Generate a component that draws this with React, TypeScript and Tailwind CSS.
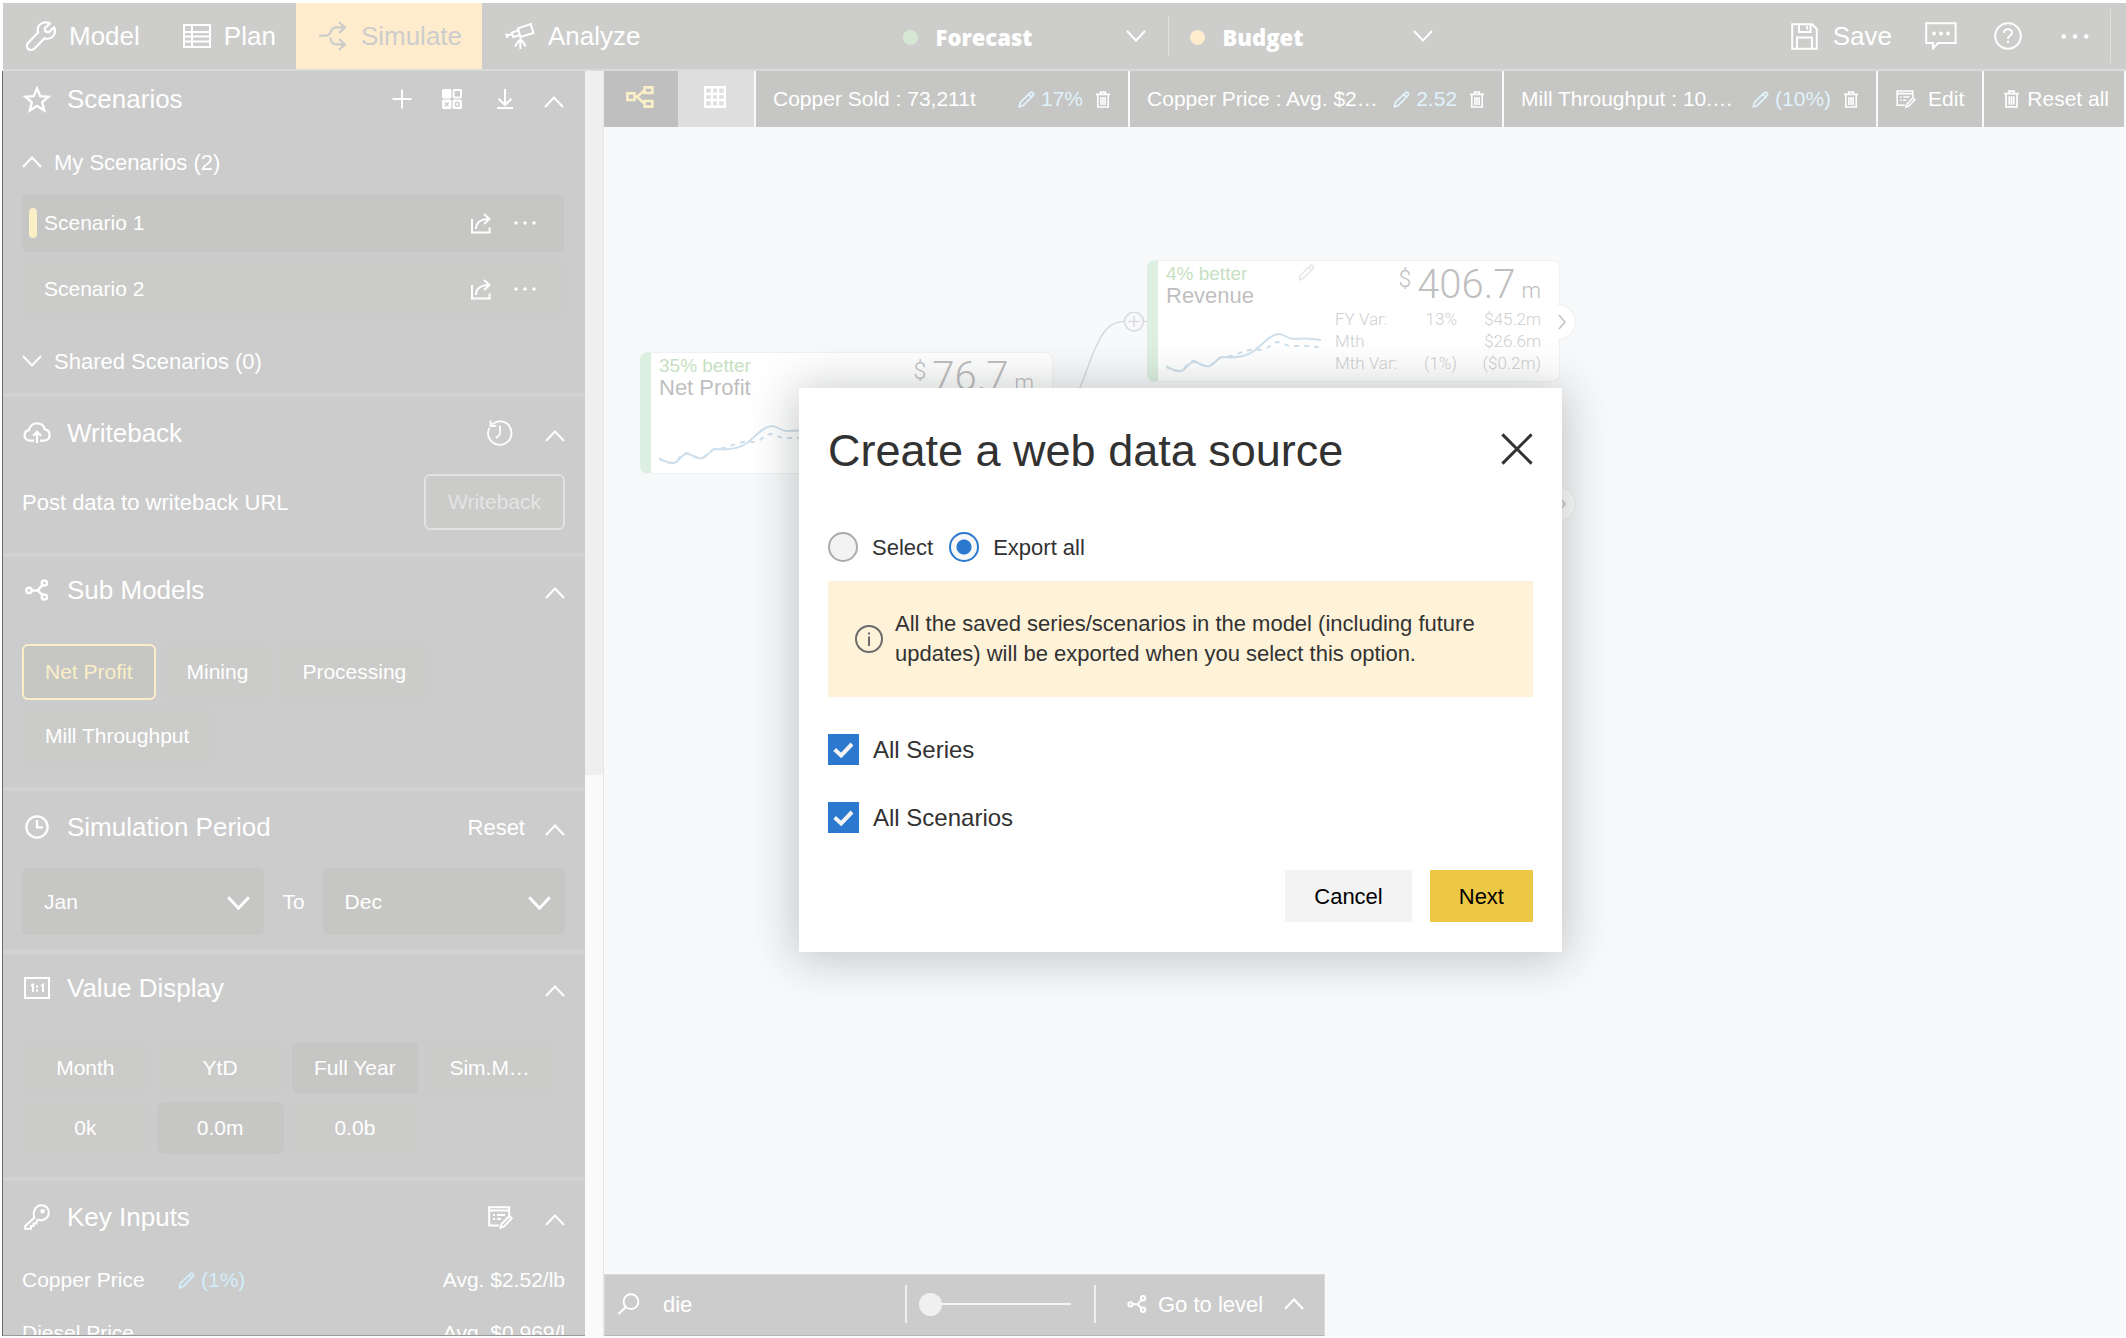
import React from "react";

type IconProps = { className?: string; children?: React.ReactNode; box?: string; sw?: number };

function Svg({ className = "", children, box = "0 0 24 24", sw = 2 }: IconProps) {
  return (
    <svg
      viewBox={box}
      className={`shrink-0 ${className}`}
      fill="none"
      stroke="currentColor"
      strokeWidth={sw}
      aria-hidden="true"
    >
      {children}
    </svg>
  );
}

const Up = ({ className = "w-[20px] h-[12px]" }: IconProps) => (
  <Svg box="0 0 20 12" className={className}>
    <path d="M1 11 L10 1.5 L19 11" />
  </Svg>
);
const Down = ({ className = "w-[20px] h-[12px]", sw = 2 }: IconProps) => (
  <Svg box="0 0 20 12" className={className} sw={sw}>
    <path d="M1 1 L10 10.5 L19 1" />
  </Svg>
);
const Wrench = () => (
  <Svg box="0 0 30 30" className="size-[30px]" sw={2.2}>
    <path
      strokeLinejoin="round"
      d="M24 2.4 C20.5 0.2 15 1.4 12.7 5 C11.4 7.2 11.6 9.6 12.2 11.6 L2.2 21.8 C-0.6 24.8 1.2 29 5 29 C6.6 29 7.6 28.4 8.8 27.2 L18.6 17.2 C22 18.4 25.8 17.2 27.8 14 C29.4 11.4 29.2 8.6 28 6.2 L23 11.2 L19.4 10.6 L18.8 7.2 Z"
    />
  </Svg>
);
const PlanIcon = () => (
  <Svg box="0 0 28 24" className="w-[28px] h-[24px]">
    <path d="M1 1 H27 V23 H1 Z M1 8 H27 M1 12.5 H27 M1 17.5 H27 M9 1 V23" />
  </Svg>
);
const SimulateIcon = () => (
  <Svg box="0 0 28 30" className="w-[28px] h-[30px]" sw={2.2}>
    <path d="M0 14.6 H6 C10 14.6 11 13.4 12 10.4 C13 7.4 14 6.4 18 6.4 H26 M20 1 L26 6.4 L20 12 M11.4 16.6 C11.8 21.4 13.4 23.4 18 23.4 H26 M20 18 L26 23.4 L20 29" />
  </Svg>
);
const Telescope = () => (
  <Svg box="0 0 30 28" className="w-[30px] h-[28px]" sw={2}>
    <path d="M13 6.4 L25.8 2 L28.4 11 L15.4 15 Z M13.2 8.4 L6.8 10.6 L8.2 15 L14.8 13.2 M7 12.2 L1.6 13.8 M1.2 11.4 L2.4 16 M15.4 16 V27 M14.4 18 L10 24.4 M16.6 18 L20.8 24.4" />
  </Svg>
);
const Star = () => (
  <Svg box="0 0 28 27" className="w-[28px] h-[27px]" sw={2.4}>
    <path d="M14 2.4 L17.2 10.2 L25.6 10.8 L19.2 16.2 L21.2 24.4 L14 20 L6.8 24.4 L8.8 16.2 L2.4 10.8 L10.8 10.2 Z" />
  </Svg>
);
const Plus = () => (
  <Svg box="0 0 20 20" className="size-[20px]">
    <path d="M10 0.5 V19.5 M0.5 10 H19.5" />
  </Svg>
);
const Tiles = () => (
  <Svg box="0 0 20 20" className="size-[20px]">
    <rect x="0" y="0" width="9.4" height="9.4" rx="1.6" fill="currentColor" stroke="none" />
    <rect x="11.6" y="1" width="7.4" height="7.4" rx="1" />
    <rect x="0" y="10.6" width="9.4" height="9.4" rx="1.6" fill="currentColor" stroke="none" />
    <rect x="10.6" y="10.6" width="9.4" height="9.4" rx="1.6" fill="currentColor" stroke="none" />
    <path d="M3 13.6 L6.6 17.2 M6.6 13.6 L3 17.2" stroke="#cccccc" strokeWidth="1.4" />
    <circle cx="15.3" cy="15.3" r="2" stroke="#cccccc" strokeWidth="1.4" />
  </Svg>
);
const Download = () => (
  <Svg box="0 0 16 20" className="w-[16px] h-[20px]">
    <path d="M8 0 V16 M1.6 9.8 L8 16 L14.4 9.8 M0 19 H16" />
  </Svg>
);
const Share = () => (
  <Svg box="0 0 20 21" className="w-[20px] h-[21px]">
    <path d="M1 6 V19.6 H18.6 V14.4 M5 16 C5 9.6 10 6 18.4 6 M13 1 L18.6 6 L13 11" />
  </Svg>
);
const Dots = ({ className = "w-[22px] h-[4px]" }: IconProps) => (
  <svg viewBox="0 0 22 4" className={`shrink-0 ${className}`} fill="currentColor" aria-hidden="true">
    <circle cx="2" cy="2" r="1.8" />
    <circle cx="11" cy="2" r="1.8" />
    <circle cx="20" cy="2" r="1.8" />
  </svg>
);
const Cloud = () => (
  <Svg box="0 0 28 22" className="w-[28px] h-[22px]" sw={2.3}>
    <path d="M11 18.6 H7 C3.4 18.6 1.6 16.2 1.6 13.4 C1.6 10.6 3.6 8.6 6 8.2 C6.6 4.2 9.8 1.4 14 1.4 C18 1.4 21 3.8 21.8 7.4 C24.6 7.8 26.6 10 26.6 13 C26.6 16.2 24.2 18.6 21 18.6 H17 M14 21 V10.6 M10 13.8 L14 9.8 L18 13.8" />
  </Svg>
);
const History = () => (
  <Svg box="0 0 26 26" className="size-[26px]" sw={1.8}>
    <path d="M5 4.6 C10 -0.2 18 0.4 22 5.6 C26 11 25 18.4 20 22.4 C14.4 26.6 6.8 25.2 3 19.6 C0.6 16 0.4 11.6 2.4 7.8 M3.6 0.6 V6 H9.4 M13 5.4 V14 L9 18.4" />
  </Svg>
);
const Nodes = ({ className = "w-[24px] h-[22px]" }: IconProps) => (
  <Svg box="0 0 24 22" className={className} sw={2.5}>
    <circle cx="4" cy="11.4" r="2.6" />
    <circle cx="19.4" cy="4" r="2.6" />
    <circle cx="19.4" cy="18" r="2.6" />
    <path d="M7 11.4 H12.6 L17.4 6.2 M12.6 11.4 L17.4 16" />
  </Svg>
);
const Clock = () => (
  <Svg box="0 0 24 24" className="size-[24px]" sw={2.3}>
    <circle cx="12" cy="12" r="10.6" />
    <path d="M12 5 V12.4 H18" />
  </Svg>
);
const Ratio = () => (
  <Svg box="0 0 26 22" className="w-[26px] h-[22px]">
    <path d="M1 1 H25 V21 H1 Z M7 9 L9 7.6 V15 M17 9 L19 7.6 V15 M13 8.4 V10.6 M13 12.6 V14.8" />
  </Svg>
);
const KeyIcon = () => (
  <Svg box="0 0 26 26" className="size-[26px]">
    <path d="M10.4 13.8 C8.4 8.8 11 1.2 17.4 1.2 C21.8 1.2 24.8 4.4 24.8 8.6 C24.8 14 19 17.4 14 15.8 L12.6 17.2 V19.4 H9.6 V22 H7 V24.8 H1.2 V22 Z" />
    <circle cx="18.6" cy="7.2" r="1.2" />
  </Svg>
);
const FormEdit = ({ className = "w-[25px] h-[23px]" }: IconProps) => (
  <Svg box="0 0 25 23" className={className}>
    <path d="M11 19.4 H1.2 V1.2 H21.2 V9 M1.2 4.6 H21.2 M5 9 H7 M9 9 H17 M5 13 H7 M9 13 H13 M12.4 21.8 L13.6 18 L21.4 10 L23.8 12.4 L16 20.4 Z" />
  </Svg>
);
const Pencil = ({ className = "w-[17px] h-[17px]" }: IconProps) => (
  <Svg box="0 0 17 17" className={className} sw={1.8}>
    <path strokeLinejoin="round" d="M1.2 15.8 L2.4 11.4 L12.4 1.6 C14 0.4 16.4 2.8 15.2 4.4 L5.4 14.4 Z M10.8 3.4 L13.6 6.2" />
  </Svg>
);
const Trash = ({ className = "w-[14px] h-[17px]" }: IconProps) => (
  <Svg box="0 0 14 17" className={className} sw={1.6}>
    <path d="M0 3.4 H14 M4.6 3 V1 H9.4 V3 M1.8 3.4 V16 H12.2 V3.4 M4.9 6 V14 M7 6 V14 M9.1 6 V14" />
  </Svg>
);
const Floppy = () => (
  <Svg box="0 0 27 27" className="size-[27px]">
    <path d="M1.2 1.2 H21 L25.8 6 V25.8 H1.2 Z M8 1.2 V9 H19.6 V1.2 M16 3 V6.4 M6 25.8 V14.6 H21 V25.8" />
  </Svg>
);
const Chat = () => (
  <Svg box="0 0 32 28" className="w-[32px] h-[28px]">
    <path d="M1.2 1.2 H30.6 V21 H13 L8 26.4 V21 H1.2 Z" />
    <g fill="currentColor" stroke="none">
      <circle cx="9" cy="11.4" r="2" />
      <circle cx="16" cy="11.4" r="2" />
      <circle cx="23" cy="11.4" r="2" />
    </g>
  </Svg>
);
const Help = () => (
  <Svg box="0 0 28 28" className="size-[28px]">
    <circle cx="14" cy="14" r="12.8" />
    <path d="M10 11 C10 6 18 6 18 10.8 C18 13.6 14 13.6 14 17 M14 18.8 V21.2" />
  </Svg>
);
const SquareNodes = () => (
  <Svg box="0 0 28 22" className="w-[28px] h-[22px]" sw={2.6}>
    <path d="M1.4 7.4 H8.6 V14 H1.4 Z M18.6 1.4 H26.4 V7 H18.6 Z M18.6 15 H26.4 V20.6 H18.6 Z M8.6 10.8 H11 L18.6 4.2 M11 10.8 L18.6 17.8" />
  </Svg>
);
const GridIcon = () => (
  <Svg box="0 0 22 22" className="size-[22px]" sw={2.4}>
    <path d="M1.2 1.2 H20.8 V20.8 H1.2 Z M1.2 8 H20.8 M1.2 14 H20.8 M8 1.2 V20.8 M14 1.2 V20.8" />
  </Svg>
);
const Search = () => (
  <Svg box="0 0 23 22" className="w-[23px] h-[22px]">
    <circle cx="14" cy="8.6" r="7.4" />
    <path d="M9 14 L1.4 21" />
  </Svg>
);

function NavTab({ icon, label, active }: { icon: React.ReactNode; label: string; active?: boolean }) {
  return (
    <button
      className={
        active
          ? "flex items-center gap-[14px] bg-[#ffeccd] pl-[23px] pr-[20px] text-[#cccccc]"
          : "flex items-center gap-[13px] pl-[23px] pr-[20px] text-white"
      }
    >
      {icon}
      {label}
    </button>
  );
}

function SeriesPicker({ label, dot }: { label: string; dot: string }) {
  return (
    <button className="flex w-[244px] items-center pt-[3px]">
      <span className={`size-[15px] rounded-full ${dot}`} />
      <span className="ml-[18px]">{label}</span>
      <span className="ml-auto pb-[4px]">
        <Down className="h-[12px] w-[22px]" />
      </span>
    </button>
  );
}

function SectionHead({ icon, title, children }: { icon: React.ReactNode; title: string; children?: React.ReactNode }) {
  return (
    <div className="flex h-[32px] items-center">
      <span className="flex w-[29px] justify-center">{icon}</span>
      <h2 className="ml-[16px] text-[26px] leading-[32px]">{title}</h2>
      <div className="ml-auto flex items-center">
        {children}
        <button aria-label={`Collapse ${title}`} className="mt-[6px]">
          <Up />
        </button>
      </div>
    </div>
  );
}

function ScenarioRow({ name, selected }: { name: string; selected?: boolean }) {
  return (
    <div
      className={
        selected
          ? "flex h-[58px] items-center rounded-md bg-[#c6c6c4] pl-[7px] pr-[28px]"
          : "flex h-[58px] items-center rounded-md bg-[#cbcbc9] pl-[7px] pr-[28px]"
      }
    >
      <span className={selected ? "h-[30px] w-[8px] rounded-full bg-[#fbefc8]" : "h-[30px] w-[8px]"} />
      <span className="ml-[7px] text-[21px]">{name}</span>
      <button aria-label={`Share ${name}`} className="ml-auto">
        <Share />
      </button>
      <button aria-label={`More for ${name}`} className="ml-[23px]">
        <Dots />
      </button>
    </div>
  );
}

function Choice({ label, on }: { label: string; on?: boolean }) {
  return (
    <button
      className={
        on ? "h-[52px] truncate rounded-md bg-[#c6c6c4]" : "h-[52px] truncate rounded-md bg-[#cbcbc9]"
      }
    >
      {label}
    </button>
  );
}

function MonthSelect({ value, label }: { value: string; label: string }) {
  return (
    <span className="relative flex-1">
      <select
        aria-label={label}
        defaultValue={value}
        className="h-[67px] w-full appearance-none rounded-md bg-[#c6c6c4] pl-[22px] text-[21px]"
      >
        <option>Jan</option>
        <option>Jun</option>
        <option>Dec</option>
      </select>
      <span className="pointer-events-none absolute top-[28px] right-[14px]">
        <Down className="h-[14px] w-[23px]" sw={2.6} />
      </span>
    </span>
  );
}

function InputRow({ name, value, change }: { name: string; value: string; change?: string }) {
  return (
    <div className="flex h-[28px] items-center text-[21px]">
      <span className="w-[156px] whitespace-nowrap">{name}</span>
      {change && (
        <span className="flex items-center gap-[6px] text-[#d3edfb]">
          <Pencil />
          {change}
        </span>
      )}
      <span className="ml-auto">{value}</span>
    </div>
  );
}

function Chip({ text, change }: { text: string; change: string }) {
  return (
    <div className="flex flex-1 items-center bg-[#c6c6c4] pr-[18px] pl-[17px] whitespace-nowrap">
      <span>{text}</span>
      <button className="ml-auto flex items-center gap-[6px] text-[#e0f3fd]">
        <Pencil />
        {change}
      </button>
      <button aria-label="Remove" className="ml-[13px]">
        <Trash />
      </button>
    </div>
  );
}

function Sparkline() {
  return (
    <svg viewBox="0 0 156 42" className="h-[42px] w-[156px]" fill="none" stroke="#cfe0ec" strokeWidth="2" aria-hidden="true">
      <path d="M0 34 C6 36 10 39 15 38 C20 37 22 29 28 29 C34 29 38 35 44 33 C49 31 50 26 56 24 C66 25 78 25 88 18 C98 10 104 2 112 1 C120 1 120 6 128 6 C138 5 146 5 155 7" />
      <path
        strokeDasharray="5 5"
        d="M0 33 C6 37 10 39 15 37 C20 36 22 27 28 28 C34 30 38 35 44 32 C49 30 50 26 56 24 C68 24 76 18 84 17 C90 16 94 18 99 16 C104 14 106 9 112 9 C118 10 120 13 126 13 C136 13 146 12 155 15"
      />
    </svg>
  );
}

type Stat = [string, string, string];

type KpiProps = { better: string; name: string; amount: string; stats: Stat[]; editable?: boolean };

function KpiCard({ better, name, amount, stats, editable }: KpiProps) {
  return (
    <div className="flex h-[122px] w-[413px] rounded-lg border border-[#f0f1f2] border-l-[11px] border-l-[#dcefe0] bg-white pr-[18px] pl-[8px] text-[#bfbfbf]">
      <div className="flex w-[169px] flex-col pt-[3px]">
        <div className="flex items-start text-[19px] leading-[20px] text-[#c7dfc2]">
          {better}
          {editable && (
            <span className="ml-auto pr-[20px] text-[#e9e9e9]">
              <Pencil />
            </span>
          )}
        </div>
        <div className="text-[22px] leading-[24px]">{name}</div>
        <div className="mt-[25px]">
          <Sparkline />
        </div>
      </div>
      <div className="flex-1">
        <div className="flex h-[47px] items-baseline justify-end gap-[6px] pt-[1px] font-['Roboto'] font-light">
          <span className="self-start pt-[4px] text-[23px] leading-[28px]">$</span>
          <span className="text-[40px] leading-[46px]">{amount}</span>
          <span className="text-[22px]">m</span>
        </div>
        <table className="w-full font-['Roboto'] text-[17px] leading-[22px] font-light text-[#cfcfcf]">
          <tbody>
            {stats.map(([label, pct, val]) => (
              <tr key={label}>
                <td className="w-[76px] p-0 text-left whitespace-nowrap">{label}</td>
                <td className="w-[46px] p-0 text-right">{pct}</td>
                <td className="p-0 text-right">{val}</td>
              </tr>
            ))}
          </tbody>
        </table>
      </div>
    </div>
  );
}

function ExpandKnob() {
  return (
    <button
      aria-label="Expand"
      className="flex h-[36px] w-[18px] items-center rounded-r-full border border-l-0 border-[#eef0f1] bg-white text-[#c4c4c4]"
    >
      <Svg box="0 0 8 16" className="h-[16px] w-[8px]" sw={1.6}>
        <path d="M1 1 L7 8 L1 15" />
      </Svg>
    </button>
  );
}

function RadioOption({ label, checked }: { label: string; checked?: boolean }) {
  return (
    <label className="flex h-[30px] items-center gap-[14px]">
      <input
        type="radio"
        name="mode"
        defaultChecked={checked}
        className="size-[30px] appearance-none rounded-full border-2 border-[#ababab] bg-[#f3f3f3] checked:border-[#2b78cf] checked:bg-[radial-gradient(circle,#2b78cf_7px,#f8f8f8_8px)]"
      />
      {label}
    </label>
  );
}

function CheckOption({ label }: { label: string }) {
  return (
    <label className="flex h-[31px] items-center text-[24px]">
      <span className="relative size-[31px]">
        <input type="checkbox" defaultChecked className="block size-full appearance-none bg-[#2b78cf]" />
        <Svg box="0 0 31 31" className="pointer-events-none absolute inset-0 size-full text-[#f3f3f3]" sw={4}>
          <path d="M6.6 15.4 L13.2 21.4 L24 10" />
        </Svg>
      </span>
      <span className="ml-[14px]">{label}</span>
    </label>
  );
}

export default function App() {
  return (
    <div className="flex h-screen flex-col overflow-hidden bg-white pt-[3px] pb-[2px] pl-[3px] font-['Liberation_Sans',Arial,sans-serif] text-white">
      <header className="flex h-[68px] shrink-0 border-b-2 border-[#dadada] bg-[#cdcdcb] text-[26px]">
        <nav className="flex">
          <NavTab icon={<Wrench />} label="Model" />
          <NavTab icon={<PlanIcon />} label="Plan" />
          <NavTab icon={<SimulateIcon />} label="Simulate" active />
          <NavTab icon={<Telescope />} label="Analyze" />
        </nav>
        <div className="ml-[242px] flex items-center font-['Open_Sans'] text-[22px] font-extrabold">
          <SeriesPicker label="Forecast" dot="bg-[#d6e8d4]" />
          <span className="mx-[21px] h-[40px] border-l border-[#dfdfdf]" />
          <SeriesPicker label="Budget" dot="bg-[#ffeccd]" />
        </div>
        <div className="ml-auto flex items-center pr-[15px]">
          <button className="flex items-center gap-[15px]">
            <Floppy />
            Save
          </button>
          <button aria-label="Comments" className="ml-[33px]">
            <Chat />
          </button>
          <button aria-label="Help" className="ml-[37px]">
            <Help />
          </button>
          <button aria-label="More" className="ml-[38px]">
            <Dots className="h-[5px] w-[30px]" />
          </button>
          <span className="ml-[20px] h-[54px] border-l border-[#dfdfdf]" />
        </div>
      </header>

      <div className="flex min-h-0 flex-1">
        <aside className="flex w-[601px] shrink-0 border-r border-[#e6e6e6]">
          <div className="min-w-0 flex-1 overflow-hidden border-b border-b-[#999999] bg-[#cccccc] shadow-[-1px_0_0_#6b6b6b]">
            <section className="pt-[12px] pr-[21px] pb-[18px] pl-[19px]">
              <SectionHead icon={<Star />} title="Scenarios">
                <button aria-label="Add" className="mr-[30px]">
                  <Plus />
                </button>
                <button aria-label="Compare" className="mr-[35px]">
                  <Tiles />
                </button>
                <button aria-label="Download" className="mr-[31px]">
                  <Download />
                </button>
              </SectionHead>
              <button className="mt-[33px] flex h-[28px] items-center gap-[12px] text-[22px]">
                <Up />
                My Scenarios (2)
              </button>
              <div className="mt-[18px] flex flex-col gap-2">
                <ScenarioRow name="Scenario 1" selected />
                <ScenarioRow name="Scenario 2" />
              </div>
              <button className="mt-[29px] flex h-[28px] items-center gap-[12px] text-[22px]">
                <Down />
                Shared Scenarios (0)
              </button>
            </section>

            <section className="border-t-4 border-[#d2d2d2] pt-[20px] pr-[20px] pb-[23px] pl-[19px]">
              <SectionHead icon={<Cloud />} title="Writeback">
                <button aria-label="History" className="mr-[32px]">
                  <History />
                </button>
              </SectionHead>
              <div className="mt-[25px] flex items-center justify-between text-[22px]">
                <span>Post data to writeback URL</span>
                <button className="h-[56px] rounded-md border-2 border-[#e2e2e2] bg-[#cbcbc9] px-[22px] text-[21px] text-[#e4e4e4]">
                  Writeback
                </button>
              </div>
            </section>

            <section className="border-t-4 border-[#d2d2d2] pt-[17px] pr-[20px] pb-[23px] pl-[19px]">
              <SectionHead icon={<Nodes />} title="Sub Models" />
              <div className="mt-[38px] flex flex-wrap gap-2 text-[21px]">
                <button className="h-[56px] rounded-md border-2 border-[#fbefc8] bg-[#c6c6c4] px-[21px] text-[#fbefc8]">
                  Net Profit
                </button>
                <button className="h-[56px] rounded-md bg-[#cbcbc9] px-[23px]">Mining</button>
                <button className="h-[56px] rounded-md bg-[#cbcbc9] px-[23px]">Processing</button>
                <button className="h-[56px] rounded-md bg-[#cbcbc9] px-[23px]">Mill Throughput</button>
              </div>
            </section>

            <section className="border-t-4 border-[#d2d2d2] pt-[20px] pr-[20px] pb-[15px] pl-[19px]">
              <SectionHead icon={<Clock />} title="Simulation Period">
                <button className="mr-[20px] text-[22px]">Reset</button>
              </SectionHead>
              <div className="mt-[25px] flex items-center gap-[18px] text-[21px]">
                <MonthSelect value="Jan" label="From month" />
                <span>To</span>
                <MonthSelect value="Dec" label="To month" />
              </div>
            </section>

            <section className="border-t-4 border-[#d2d2d2] pt-[18px] pr-[20px] pb-[23px] pl-[19px]">
              <SectionHead icon={<Ratio />} title="Value Display" />
              <div className="mt-[38px] grid grid-cols-4 gap-2 pr-3 text-[21px]">
                <Choice label="Month" />
                <Choice label="YtD" />
                <Choice label="Full Year" on />
                <Choice label="Sim.M…" />
                <Choice label="0k" />
                <Choice label="0.0m" on />
                <Choice label="0.0b" />
              </div>
            </section>

            <section className="border-t-4 border-[#d2d2d2] pt-[20px] pr-[20px] pl-[19px]">
              <SectionHead icon={<KeyIcon />} title="Key Inputs">
                <button aria-label="Edit inputs" className="mr-[32px]">
                  <FormEdit />
                </button>
              </SectionHead>
              <div className="mt-[33px] flex flex-col gap-[25px]">
                <InputRow name="Copper Price" change="(1%)" value="Avg. $2.52/lb" />
                <InputRow name="Diesel Price" value="Avg. $0.969/l" />
              </div>
            </section>
          </div>
          <div className="w-[18px] bg-[#fafafa]">
            <div className="h-[704px] bg-[#efefef]" />
          </div>
        </aside>

        <main className="relative flex min-w-0 flex-1 flex-col bg-[#f8f9fb]">
          <div className="mr-[2px] flex h-[56px] shrink-0 gap-[2px] text-[21px]">
            <div className="flex">
              <button aria-label="Tree view" className="flex w-[74px] justify-center bg-[#bfbfbf] pt-[15px] pr-[2px] text-[#fbefc8]">
                <SquareNodes />
              </button>
              <button aria-label="Table view" className="flex w-[76px] justify-center bg-[#dedede] pt-[15px] pr-[2px]">
                <GridIcon />
              </button>
            </div>
            <Chip text="Copper Sold : 73,211t" change="17%" />
            <Chip text="Copper Price : Avg. $2…" change="2.52" />
            <Chip text="Mill Throughput : 10.…" change="(10%)" />
            <button className="flex items-center gap-[12px] bg-[#c6c6c4] px-[18px]">
              <FormEdit className="h-[18px] w-[20px]" />
              Edit
            </button>
            <button className="flex items-center gap-[8px] bg-[#c6c6c4] pr-[15px] pl-[20px]">
              <Trash className="h-[18px] w-[15px]" />
              Reset all
            </button>
          </div>

          <div className="relative flex-1">
            <svg viewBox="0 0 80 80" className="absolute top-[185px] left-[463px] size-[80px]" fill="none" stroke="#d9dadb" strokeWidth="1.5" aria-hidden="true">
              <path d="M11 80 C17 68 22 50 28 37 C36 18 44 9.5 57 9.5 M77 9.5 H80" />
              <circle cx="67" cy="9.5" r="9.4" />
              <path d="M67 4 V15 M61.5 9.5 H72.5" />
            </svg>
            <div className="absolute top-[225px] left-[36px]">
              <KpiCard better="35% better" name="Net Profit" amount="76.7" stats={[]} />
            </div>
            <div className="absolute top-[133px] left-[543px]">
              <KpiCard
                better="4% better"
                name="Revenue"
                amount="406.7"
                editable
                stats={[
                  ["FY Var:", "13%", "$45.2m"],
                  ["Mth", "", "$26.6m"],
                  ["Mth Var:", "(1%)", "($0.2m)"],
                ]}
              />
            </div>
            <div className="absolute top-[177px] left-[954px]">
              <ExpandKnob />
            </div>
            <div className="absolute top-[359px] left-[954px]">
              <ExpandKnob />
            </div>

            <div
              role="dialog"
              aria-labelledby="dialog-title"
              className="absolute top-[261px] left-[195px] flex w-[763px] flex-col bg-white px-[29px] pt-[37px] pb-[30px] text-[22px] text-[#323232] shadow-[0_4px_44px_4px_rgba(20,30,30,0.24)]"
            >
              <div className="flex items-start justify-between">
                <h1 id="dialog-title" className="text-[45px] leading-[52px]">
                  Create a web data source
                </h1>
                <button aria-label="Close" className="pt-[8px]">
                  <Svg box="0 0 32 32" className="size-[32px]" sw={3}>
                    <path d="M1.4 1.4 L30.6 30.6 M30.6 1.4 L1.4 30.6" />
                  </Svg>
                </button>
              </div>
              <div className="mt-[55px] flex gap-[16px]">
                <RadioOption label="Select" />
                <RadioOption label="Export all" checked />
              </div>
              <div className="mt-[19px] flex h-[116px] items-center bg-[#fef2d8] pl-[27px]">
                <Svg box="0 0 28 28" className="size-[28px] text-[#6b6b6b]">
                  <circle cx="14" cy="14" r="13" />
                  <path d="M14 11.6 V21 M14 7.6 V9.6" />
                </Svg>
                <p className="ml-[12px] w-[610px] leading-[30px]">
                  All the saved series/scenarios in the model (including future updates) will be exported when you select
                  this option.
                </p>
              </div>
              <div className="mt-[37px] flex flex-col gap-[37px]">
                <CheckOption label="All Series" />
                <CheckOption label="All Scenarios" />
              </div>
              <div className="mt-[37px] flex justify-end gap-[18px] text-black">
                <button className="h-[52px] bg-[#f3f3f3] px-[29px]">Cancel</button>
                <button className="h-[52px] bg-[#edc846] px-[29px]">Next</button>
              </div>
            </div>
          </div>

          <footer className="flex h-[62px] w-[721px] items-center border border-[#d9dbdb] border-b-[#b5b5b5] bg-[#cccccc] pb-[2px] pl-[12px] text-[22px]">
            <Search />
            <input aria-label="Search" defaultValue="die" className="ml-[23px] w-[242px] bg-transparent outline-none" />
            <span className="h-[38px] border-l-2 border-[#efefef]" />
            <input
              aria-label="Zoom"
              type="range"
              defaultValue={0}
              className="ml-[12px] w-[152px] appearance-none bg-[linear-gradient(#f6f6f6,#f6f6f6)] bg-[length:100%_2px] bg-center bg-no-repeat [&::-webkit-slider-thumb]:size-[23px] [&::-webkit-slider-thumb]:appearance-none [&::-webkit-slider-thumb]:rounded-full [&::-webkit-slider-thumb]:bg-[#f0f0f0]"
            />
            <span className="ml-[23px] h-[38px] border-l-2 border-[#efefef]" />
            <button className="ml-[31px] flex items-center">
              <Nodes className="h-[18px] w-[20px]" />
              <span className="mr-[21px] ml-[11px]">Go to level</span>
              <Up />
            </button>
          </footer>
        </main>
      </div>
    </div>
  );
}
